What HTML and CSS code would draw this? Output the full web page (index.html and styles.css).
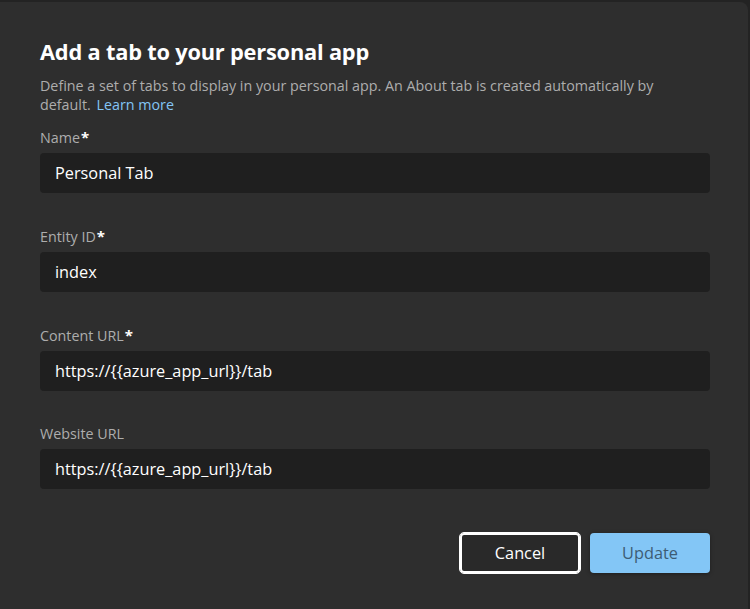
FILE: index.html
```html
<!DOCTYPE html>
<html lang="en">
<head>
<meta charset="utf-8">
<title>Add a tab to your personal app</title>
<link rel="stylesheet" href="styles.css">
</head>
<body>
<div class="dialog">
  <h1 class="title">Add a tab to your personal app</h1>
  <p class="desc"><span>Define a set of tabs to display in your personal app. An About tab is created automatically by</span><br><span>default.</span> <a class="link" href="#">Learn more</a></p>
  <div class="field">
    <label class="label">Name<span class="req">*</span></label>
    <div class="input">Personal Tab</div>
  </div>
  <div class="field">
    <label class="label">Entity ID<span class="req">*</span></label>
    <div class="input">index</div>
  </div>
  <div class="field">
    <label class="label">Content URL<span class="req">*</span></label>
    <div class="input">https://{{azure_app_url}}/tab</div>
  </div>
  <div class="field">
    <label class="label">Website URL</label>
    <div class="input">https://{{azure_app_url}}/tab</div>
  </div>
  <div class="actions">
    <button class="btn btn-cancel">Cancel</button>
    <button class="btn btn-update">Update</button>
  </div>
</div>
</body>
</html>
```
FILE: styles.css
```css
html, body {
  margin: 0;
  padding: 0;
  background: #232323;
  height: 100%;
  overflow: hidden;
}
body {
  font-family: "Open Sans", "Noto Sans", sans-serif;
  color: #ffffff;
}
.dialog {
  box-sizing: border-box;
  margin-top: 2px;
  width: 748px;
  height: 607px;
  background: #2e2e2e;
  border-top-right-radius: 8px;
  padding: 36px 38px 0 40px;
}
.title {
  margin: 0;
  font-size: 21.8px;
  font-weight: 700;
  line-height: 28px;
  letter-spacing: -0.2px;
}
.desc {
  margin: 10px 0 0 0;
  font-size: 14.3px;
  line-height: 19px;
  color: #adadad;
}
.link {
  color: #83c5f5;
  text-decoration: none;
  margin-left: 2px;
}
.field {
  margin-top: 13px;
}
.field + .field {
  margin-top: 33px;
}
.label {
  display: block;
  font-size: 14.3px;
  line-height: 20px;
  color: #adadad;
}
.req {
  color: #ffffff;
  font-weight: 700;
  font-size: 15px;
  margin-left: 1px;
}
.input {
  margin-top: 5px;
  height: 40px;
  box-sizing: border-box;
  background: #1f1f1f;
  border-radius: 4px;
  padding: 0 15px;
  display: flex;
  align-items: center;
  font-size: 16.3px;
  color: #ffffff;
}
.actions {
  display: flex;
  justify-content: flex-end;
  gap: 10px;
  margin-top: 44px;
}
.btn {
  width: 120px;
  height: 40px;
  box-sizing: border-box;
  border-radius: 4px;
  font-family: inherit;
  font-size: 16.3px;
  padding: 0;
}
.btn-cancel {
  background: #292929;
  color: #ffffff;
  border: 2px solid #ffffff;
  outline: 1px solid #ffffff;
  outline-offset: 0;
}
.btn-update {
  background: #83c6f6;
  color: #3d5c74;
  border: none;
  box-shadow: 0 1px 4px rgba(0, 0, 0, 0.35);
}
```
